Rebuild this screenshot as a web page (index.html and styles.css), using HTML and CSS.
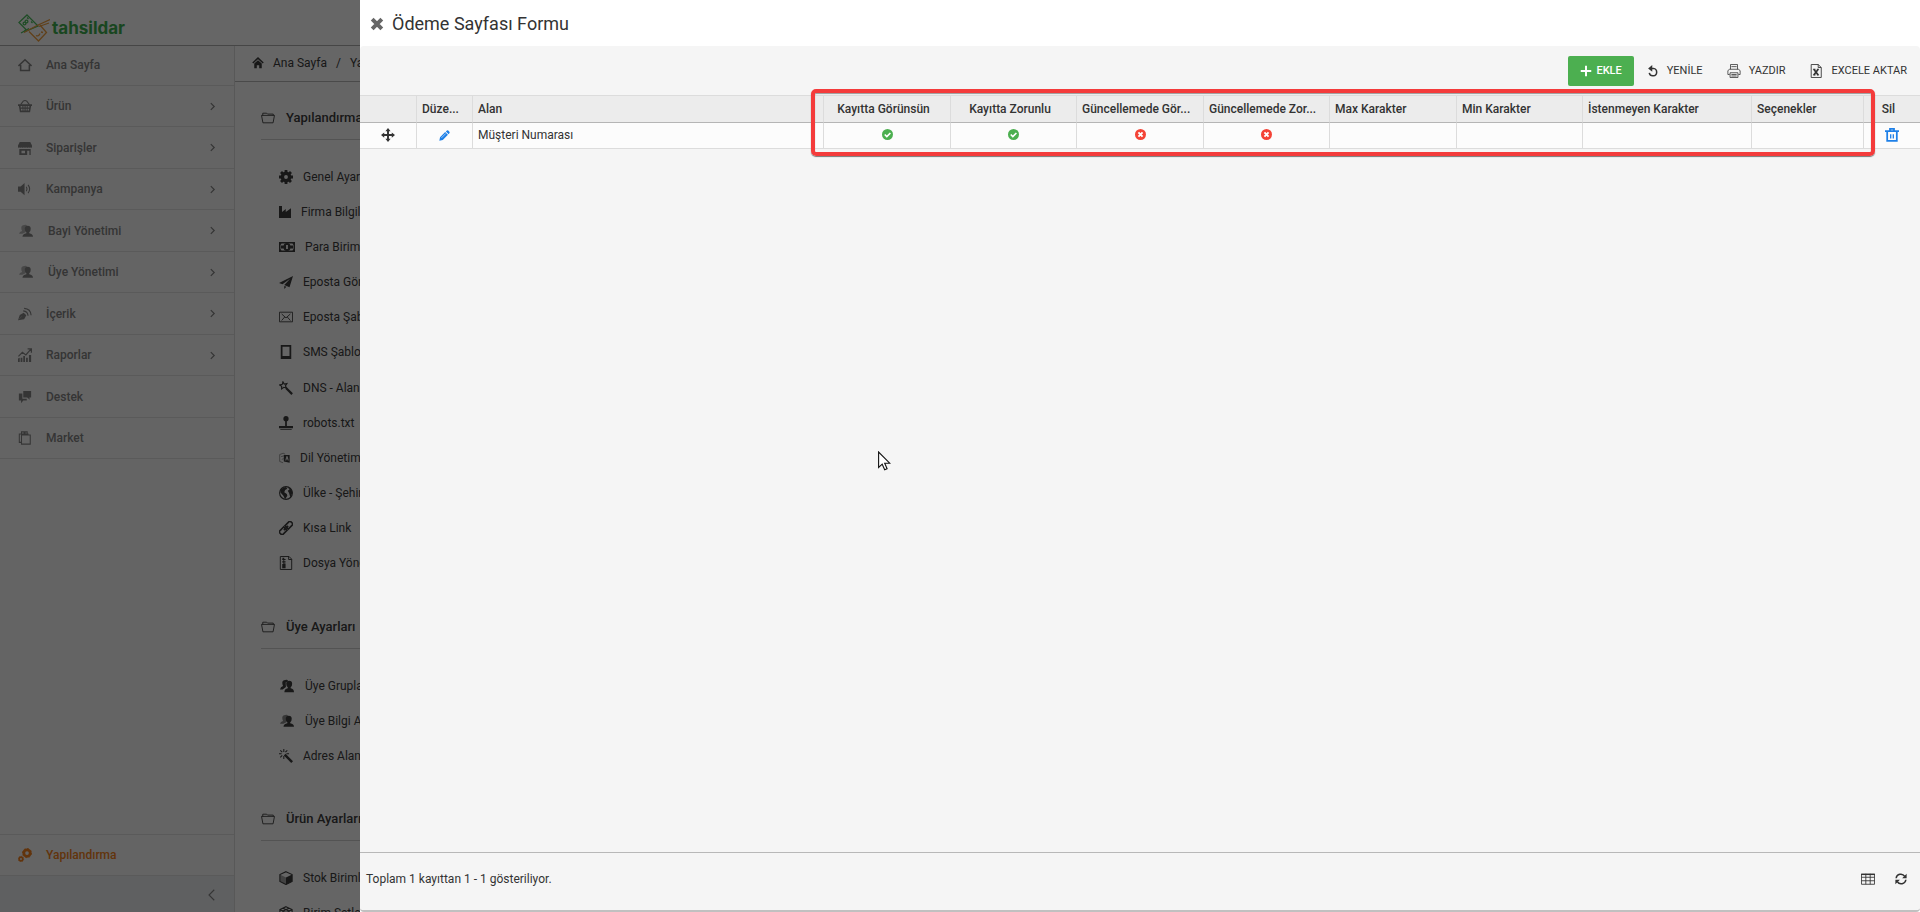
FILE: index.html
```html
<!DOCTYPE html>
<html lang="tr">
<head>
<meta charset="utf-8">
<title>Ödeme Sayfası Formu</title>
<link rel="stylesheet" href="styles.css">
</head>
<body>
<svg class="sprite" aria-hidden="true">
  <symbol id="i-home" viewBox="0 0 16 16"><path d="M.5 9 8 2l7.500 7M3 8v6.200h10V8" fill="none" stroke="currentColor" stroke-width="1.800"/></symbol>
  <symbol id="i-homefill" viewBox="0 0 16 16"><path d="M1 8 8 1.500 15 8" fill="none" stroke="currentColor" stroke-width="2"/><path d="M3 8.600 8 4.200l5 4.400V15H9.600v-4H6.400v4H3z" fill="currentColor"/></symbol>
  <symbol id="i-basket" viewBox="0 0 16 16"><path d="M3 6.500 6 2.500Q8 .8 10 2.500l3 4" fill="none" stroke="currentColor" stroke-width="1.200"/><path d="M0 6h16v2h-1l-1.200 7H2.200L1 8H0zM3 8v1.800h2V8zm3.200 0v1.800h1.300V8zm2.500 0v1.800H10V8zM11 8v1.800h2V8zM3.400 11v2h1.800v-2zm2.800 0v2h1.300v-2zm2.500 0v2H10v-2zm2.300 0v2h1.600v-2z" fill="currentColor" fill-rule="evenodd"/></symbol>
  <symbol id="i-shop" viewBox="0 0 16 16"><path d="M2 1h12l2 4v2q-1 1.500-2.200 0-1 1.500-2 0-1 1.500-1.900 0-.9 1.500-1.900 0-1 1.500-1.900 0-1 1.500-2 0-1 1.500-2 0Q1 8.500 0 7V5zM1.500 9h13v7h-13zM4 11v3h4v-3zm6.500 0v5H13v-5z" fill="currentColor" fill-rule="evenodd"/></symbol>
  <symbol id="i-sound" viewBox="0 0 16 16"><path d="M0 5h3l4.500-4v14L3 11H0z" fill="currentColor"/><path d="M9.500 5.500q1.600 2.500 0 5M11.500 3.300q3.600 4.700 0 9.400" fill="none" stroke="currentColor" stroke-width="1.200"/></symbol>
  <symbol id="i-users" viewBox="0 0 16 16"><g fill="currentColor"><path opacity=".6" d="M6 1q3-.8 3.200 1.500L7 4l.8 5L4 11H0q.500-2 3.500-3Q2.500 6 2.600 4 2.800 1 6 1z"/><path d="M10 2q3.400 0 3.400 3.500 0 3-1.700 4v1.200q4.300.8 4.300 3.800H4q0-3 4.400-3.800V9.500Q6.600 8.500 6.600 5.500 6.600 2 10 2z"/></g></symbol>
  <symbol id="i-usersdark" viewBox="0 0 16 16"><g fill="currentColor"><path d="M6 1q3-.8 3.200 1.500L6.500 4l.3 5L3 12H0q.500-3 3.500-4Q2.500 6 2.600 4 2.800 1 6 1z"/><path d="M10.500 2q3.400 0 3.400 3.500 0 3-1.700 4v1.200Q16 11.500 16 15H5q0-3.500 3.900-4.300V9.500Q7.100 8.500 7.100 5.500 7.100 2 10.500 2z"/></g></symbol>
  <symbol id="i-blog" viewBox="0 0 16 16"><path d="M0 15l2-6 4.500-2.500 3 3L7 14z" fill="currentColor"/><path d="M0 15l4.500-4.500" stroke="#aaa"/><path d="M6 4.500q5 .5 5.500 5.500M7 1.500q7.500.5 8 8" fill="none" stroke="currentColor" stroke-width="1.300"/></symbol>
  <symbol id="i-chart" viewBox="0 0 16 16"><path d="M0 16v-4l2-1v5zm3 0v-5h2v5zm3 0V9h2v7zm3.200 0v-5h2v5zm3.300 0V8h2.500v8z" fill="currentColor"/><path d="M.5 9.500 5 5l4 3 5.500-6.500M11 1h4.300v4.500" fill="none" stroke="currentColor" stroke-width="1.400"/></symbol>
  <symbol id="i-chat" viewBox="0 0 16 16"><path d="M6 1h9v7.500h-2l.5 2.500-3-2.500H6zM1 4h4v6h5v2H6l-2.500 3V12H1z" fill="currentColor"/></symbol>
  <symbol id="i-bag" viewBox="0 0 16 16"><path d="M4 4.500h10V15H4zM4 13H1.500V3.500H12M4 3V1h3v2.500M8 3V1h2.500v3" fill="none" stroke="currentColor" stroke-width="1.200"/></symbol>
  <symbol id="i-gears" viewBox="0 0 16 16"><g fill="none" stroke="currentColor"><circle cx="10.300" cy="5.800" r="3.700" stroke-width="3.200"/><circle cx="10.300" cy="5.800" r="5.200" stroke-width="1" stroke-dasharray="2 2"/><circle cx="3.400" cy="12.600" r="2.100" stroke-width="2"/><circle cx="3.400" cy="12.600" r="3.100" stroke-width=".7" stroke-dasharray="1.200 1.200"/></g></symbol>
  <symbol id="i-right" viewBox="0 0 16 16"><path d="M5 2l6 6-6 6" fill="none" stroke="currentColor" stroke-width="2.200"/></symbol>
  <symbol id="i-left" viewBox="0 0 16 16"><path d="M11 1 4 8l7 7" fill="none" stroke="currentColor" stroke-width="1.500"/></symbol>
  <symbol id="i-folder" viewBox="0 0 16 16"><path d="M2 5V2.500h4.500l1 1H14V5M.6 5h14.800l-1.600 8.500H2.200z" fill="none" stroke="currentColor"/></symbol>
  <symbol id="i-gear" viewBox="0 0 16 16"><circle cx="8" cy="8" r="4.200" fill="none" stroke="currentColor" stroke-width="4"/><path d="M8 0v3M8 13v3M0 8h3M13 8h3M2.300 2.300l2 2M11.700 11.700l2 2M2.300 13.700l2-2M11.700 4.300l2-2" stroke="currentColor" stroke-width="3.200"/></symbol>
  <symbol id="i-factory" viewBox="0 0 16 16"><path d="M0 0h4v8l5-4v4l7-5v13H0z" fill="currentColor"/></symbol>
  <symbol id="i-cash" viewBox="0 0 16 10"><path d="M0 0h16v10H0zM2.500 1.500 1.500 3v4l1 1.500h11l1-1.500V3l-1-1.500z" fill="currentColor" fill-rule="evenodd"/><path d="M8 1a3.600 4 0 0 1 0 8 3.600 4 0 0 1 0-8zm-.9 2v4h1.800V3zM2 3.500h2.500v3H2zm9.500 0H14v3h-2.500z" fill="currentColor" fill-rule="evenodd"/></symbol>
  <symbol id="i-plane" viewBox="0 0 16 16"><path d="M16 1 0 9l4 1.500L13 4l-7 7.500 6 2.500zM6 12.500V16l2.500-2.500z" fill="currentColor"/></symbol>
  <symbol id="i-mail" viewBox="0 0 16 16"><path d="M.5 2.500h15v11H.5zM3 4.500l5 4.500 5-4.500M3 12l3.500-4M13 12 9.500 8" fill="none" stroke="currentColor"/></symbol>
  <symbol id="i-tablet" viewBox="0 0 16 16"><path d="M2 0h12v16H2zM4 2v10.500h8V2z" fill="currentColor" fill-rule="evenodd"/></symbol>
  <symbol id="i-starwand" viewBox="0 0 16 16"><path d="M4.500 1 6 3.500 9 3 7.300 5.500 8.500 8l-3-.8L3 9V6L.8 4.500l3-.8z" fill="none" stroke="currentColor" stroke-width="1.300"/><path d="M8 8l7 7" stroke="currentColor" stroke-width="2.500"/></symbol>
  <symbol id="i-wand" viewBox="0 0 16 16"><path d="M6.500 6.500 15 15" stroke="currentColor" stroke-width="2.800"/><path d="M5.500 0v3.500M5.500 8v3.500M0 5.500h3M8.500 5.500h3M1.500 1.500l2.200 2.200M9.500 1.500 7.300 3.700M1.500 9.500l2.200-2.200" stroke="currentColor" stroke-width="1.200"/></symbol>
  <symbol id="i-joy" viewBox="0 0 16 16"><circle cx="8" cy="3" r="3" fill="currentColor"/><path d="M7 5h2v6.500h7V14H0v-2.500h7zM1.500 15h13v1h-13z" fill="currentColor"/></symbol>
  <symbol id="i-lang" viewBox="0 0 16 16"><path d="M1 3l5-2 3 1.500M1 3v10l5 2M3 6l4-1M4 10l3-1" fill="none" stroke="currentColor" opacity=".7"/><path d="M7 3.500h8.500V15L7 13zm3.700 2-1.500 6h1.300l.4-1.700h1.500l.4 2h1.300l-1.600-6.300zm.9 1.500.4 1.700h-.9z" fill="currentColor" fill-rule="evenodd"/></symbol>
  <symbol id="i-globe" viewBox="0 0 16 16"><circle cx="8" cy="8" r="7.300" fill="none" stroke="currentColor" stroke-width="1.300"/><path d="M2 4q3-3 6-3L9.500 3 7 4.500 6 7l3 2 .5 2L7 15 5 11 1.500 7zM10 1.500q5 2 5.500 6L13 13l-1.500-5L10 5.500 12 4z" fill="currentColor"/></symbol>
  <symbol id="i-link" viewBox="0 0 16 16"><g fill="none" stroke="currentColor" stroke-width="1.900" transform="rotate(-45 8 8)"><rect x="-1" y="5.300" width="8" height="5.400"/><rect x="9" y="5.300" width="8" height="5.400"/><path d="M4.500 8h7"/></g></symbol>
  <symbol id="i-zip" viewBox="0 0 16 16"><path d="M1.500.6h10l3 3v11.800h-13zM11 .6V4h3.500" fill="none" stroke="currentColor" stroke-width="1.100"/><path d="M4 2h2v1.300h1.500v1.400H6V6h1.500v1.400H6v1.300h1.500V14H3.700V9H5V7.400H3.700V6H5V4.700H3.700V3.300H4z" fill="currentColor"/></symbol>
  <symbol id="i-cube" viewBox="0 0 16 16"><path d="M8 .8 15 4v8l-7 3.500L1 12V4z" fill="none" stroke="currentColor" stroke-width="1.200"/><path d="M8 7.500 15 4v8l-7 3.500z" fill="currentColor"/><path d="M1 4l7 3.500V15L1 12z" fill="currentColor" opacity=".45"/></symbol>
  <symbol id="i-cubes" viewBox="0 0 16 16"><path d="M8 .8 15 4v8l-7 3.500L1 12V4zM1 4l7 3.500L15 4M8 7.500v8M4.500 2.500l7 3.200v8M11.500 2.500l-7 3.200v8M1 8l7 3.500L15 8" fill="none" stroke="currentColor" stroke-width="1.200"/></symbol>
  <symbol id="i-close" viewBox="0 0 16 16"><path d="M2.500 2.500l11 11M13.500 2.500l-11 11" stroke="currentColor" stroke-width="4.500"/></symbol>
  <symbol id="i-plus" viewBox="0 0 16 16"><path d="M8 1v14M1 8h14" stroke="currentColor" stroke-width="2.600"/></symbol>
  <symbol id="i-undo" viewBox="0 0 16 16"><path d="M5 4.500h3.500a5 5 0 1 1-5.500 6" fill="none" stroke="currentColor" stroke-width="2"/><path d="M7 0v9L1.500 4.500z" fill="currentColor"/></symbol>
  <symbol id="i-print" viewBox="0 0 16 16"><path d="M4 6V.6h8V6M1 12V7.500L3 6h10l2 1.500V12h-2M1 12h2M3.500 10h9v5.400h-9zM5 12h6M5 13.700h6M5 3h6" fill="none" stroke="currentColor" stroke-width=".9"/></symbol>
  <symbol id="i-excel" viewBox="0 0 16 16"><path d="M2.500.6h8l3.500 3.400v11.400H2.500zM10.500.6V4H14" fill="none" stroke="currentColor"/><path d="M5.500 6l5 6.500M10.500 6l-5 6.500" stroke="currentColor" stroke-width="2"/><path d="M4.500 6h3M9 6h2.500M4.500 12.500h3M9 12.500h2.500" stroke="currentColor"/></symbol>
  <symbol id="i-move" viewBox="0 0 16 16"><path d="M8 2v12M2 8h12" stroke="currentColor" stroke-width="2.200"/><path d="M8 0l3 3.700H5zM8 16l3-3.700H5zM0 8l3.700-3v6zM16 8l-3.700-3v6z" fill="currentColor"/></symbol>
  <symbol id="i-pencil" viewBox="0 0 16 16"><path d="M.5 15.500l1-5L9 3l4 4-7.500 7.500zM10 2l1.500-1.300q1-.7 2 .2l1.600 1.600q.9 1 .2 2L14 6z" fill="currentColor"/><path d="M3.500 11.500 10 5" stroke="#fff" stroke-width=".8"/></symbol>
  <symbol id="i-ok" viewBox="0 0 16 16"><circle cx="8" cy="8" r="8" fill="currentColor"/><path d="M4 8l3 3 5.200-5.200" fill="none" stroke="#fff" stroke-width="2.400"/></symbol>
  <symbol id="i-no" viewBox="0 0 16 16"><circle cx="8" cy="8" r="8" fill="currentColor"/><path d="M5 5l6 6M11 5l-6 6" stroke="#fff" stroke-width="2.800"/></symbol>
  <symbol id="i-trash" viewBox="0 0 16 16"><path d="M0 3.700h16M5.700 3V1h4.600v2M2.500 3.500v11.300h11V3.500" fill="none" stroke="currentColor" stroke-width="2"/><path d="M6.500 7v5M9.500 7v5" stroke="currentColor" stroke-width="1.500"/></symbol>
  <symbol id="i-grid" viewBox="0 0 16 16"><path d="M.5 2.500h15v11.500H.5zM.5 6h15M.5 10h15M5.500 2v12M10.500 2v12" fill="none" stroke="currentColor"/><path d="M0 2h16v1.500H0z" fill="currentColor"/></symbol>
  <symbol id="i-sync" viewBox="0 0 16 16"><path d="M1.500 7A6.300 6.300 0 0 1 13 4.500M14.500 9A6.300 6.300 0 0 1 3 11.500" fill="none" stroke="currentColor" stroke-width="2"/><path d="M15.500 1v6H9.500zM.5 15V9h6z" fill="currentColor"/></symbol>
</svg>

<div class="app">
  <header class="topbar">
    <a class="logo" href="#">
      <svg class="logo-mark" viewBox="0 0 32 28" aria-hidden="true">
        <g fill="none" stroke-width="1.300">
          <path d="M9 1 20 12l-8 3.500-6 2.500 2-2.500L1 8.500z" stroke="#4fbf60"/>
          <circle cx="6.500" cy="9.500" r="1.400" stroke="#4fbf60"/>
          <circle cx="8.500" cy="7.500" r="1.400" stroke="#4fbf60"/>
          <path d="M9 3.500l1.500 1.500M13 7.500l1.500 1.500M3 19l8-4.500" stroke="#4fbf60"/>
          <path d="M11 17.500 20.500 27l8-8.500L22 11" stroke="#f0a040"/>
          <path d="M32 5.500 19 11.500 6 18.500M31 9l-10 3.500" stroke="#f0a040"/>
          <path d="M18 21.500q2.500 1.500 4-2M23 18l2 .5" stroke="#f0a040"/>
        </g>
      </svg>
      <span class="logo-text">tahsildar</span>
    </a>
  </header>
  <div class="workspace">
    <aside class="sidebar">
      <nav class="menu">
        <a class="menu-item" href="#"><svg class="ic"><use href="#i-home"/></svg><span>Ana Sayfa</span></a>
        <a class="menu-item" href="#"><svg class="ic"><use href="#i-basket"/></svg><span>Ürün</span><svg class="ic arrow"><use href="#i-right"/></svg></a>
        <a class="menu-item" href="#"><svg class="ic"><use href="#i-shop"/></svg><span>Siparişler</span><svg class="ic arrow"><use href="#i-right"/></svg></a>
        <a class="menu-item" href="#"><svg class="ic"><use href="#i-sound"/></svg><span>Kampanya</span><svg class="ic arrow"><use href="#i-right"/></svg></a>
        <a class="menu-item" href="#"><svg class="ic wide"><use href="#i-users"/></svg><span>Bayi Yönetimi</span><svg class="ic arrow"><use href="#i-right"/></svg></a>
        <a class="menu-item" href="#"><svg class="ic wide"><use href="#i-users"/></svg><span>Üye Yönetimi</span><svg class="ic arrow"><use href="#i-right"/></svg></a>
        <a class="menu-item" href="#"><svg class="ic"><use href="#i-blog"/></svg><span>İçerik</span><svg class="ic arrow"><use href="#i-right"/></svg></a>
        <a class="menu-item" href="#"><svg class="ic"><use href="#i-chart"/></svg><span>Raporlar</span><svg class="ic arrow"><use href="#i-right"/></svg></a>
        <a class="menu-item" href="#"><svg class="ic"><use href="#i-chat"/></svg><span>Destek</span></a>
        <a class="menu-item" href="#"><svg class="ic"><use href="#i-bag"/></svg><span>Market</span></a>
      </nav>
      <a class="menu-item menu-config" href="#"><svg class="ic"><use href="#i-gears"/></svg><span>Yapılandırma</span></a>
      <button class="collapse" type="button" aria-label="Menüyü daralt"><svg class="ic narrow"><use href="#i-left"/></svg></button>
    </aside>
    <main class="content">
      <nav class="crumbs" aria-label="Konum">
        <svg class="ic narrow"><use href="#i-homefill"/></svg><a href="#">Ana Sayfa</a><span>/</span><a href="#">Yapılandırma</a>
      </nav>
      <section class="group">
        <h2 class="group-title"><svg class="ic"><use href="#i-folder"/></svg>Yapılandırma Ayarları</h2>
        <ul class="links">
          <li><a href="#"><svg class="ic"><use href="#i-gear"/></svg>Genel Ayarlar</a></li>
          <li><a href="#"><svg class="ic narrow"><use href="#i-factory"/></svg>Firma Bilgileri</a></li>
          <li><a href="#"><svg class="ic wide"><use href="#i-cash"/></svg>Para Birimleri</a></li>
          <li><a href="#"><svg class="ic"><use href="#i-plane"/></svg>Eposta Gönderimi</a></li>
          <li><a href="#"><svg class="ic"><use href="#i-mail"/></svg>Eposta Şablonları</a></li>
          <li><a href="#"><svg class="ic"><use href="#i-tablet"/></svg>SMS Şablonları</a></li>
          <li><a href="#"><svg class="ic"><use href="#i-starwand"/></svg>DNS - Alan Adı</a></li>
          <li><a href="#"><svg class="ic"><use href="#i-joy"/></svg>robots.txt</a></li>
          <li><a href="#"><svg class="ic slim"><use href="#i-lang"/></svg>Dil Yönetimi</a></li>
          <li><a href="#"><svg class="ic"><use href="#i-globe"/></svg>Ülke - Şehir</a></li>
          <li><a href="#"><svg class="ic"><use href="#i-link"/></svg>Kısa Link</a></li>
          <li><a href="#"><svg class="ic"><use href="#i-zip"/></svg>Dosya Yönetimi</a></li>
        </ul>
      </section>
      <section class="group">
        <h2 class="group-title"><svg class="ic"><use href="#i-folder"/></svg>Üye Ayarları</h2>
        <ul class="links">
          <li><a href="#"><svg class="ic wide"><use href="#i-usersdark"/></svg>Üye Grupları</a></li>
          <li><a href="#"><svg class="ic wide"><use href="#i-users"/></svg>Üye Bilgi Alanları</a></li>
          <li><a href="#"><svg class="ic"><use href="#i-wand"/></svg>Adres Alanları</a></li>
        </ul>
      </section>
      <section class="group">
        <h2 class="group-title"><svg class="ic"><use href="#i-folder"/></svg>Ürün Ayarları</h2>
        <ul class="links">
          <li><a href="#"><svg class="ic"><use href="#i-cube"/></svg>Stok Birimleri</a></li>
          <li><a href="#"><svg class="ic"><use href="#i-cubes"/></svg>Birim Setleri</a></li>
        </ul>
      </section>
    </main>
  </div>
</div>

<div class="overlay">
  <section class="drawer" role="dialog" aria-labelledby="drawer-title">
    <header class="drawer-head">
      <button class="close" type="button" aria-label="Kapat"><svg class="ic"><use href="#i-close"/></svg></button>
      <h1 id="drawer-title">Ödeme Sayfası Formu</h1>
    </header>
    <div class="panel">
      <div class="toolbar">
        <button class="btn btn-add" type="button"><svg class="ic"><use href="#i-plus"/></svg>EKLE</button>
        <button class="btn" type="button"><svg class="ic narrow"><use href="#i-undo"/></svg>YENİLE</button>
        <button class="btn" type="button"><svg class="ic"><use href="#i-print"/></svg>YAZDIR</button>
        <button class="btn" type="button"><svg class="ic"><use href="#i-excel"/></svg>EXCELE AKTAR</button>
      </div>
      <div class="table-wrap">
        <table class="grid">
          <colgroup>
            <col class="c-drag"><col class="c-tool"><col>
            <col class="c-flag"><col class="c-text"><col class="c-flag"><col class="c-text"><col class="c-flag"><col class="c-text">
            <col class="c-long"><col class="c-opt"><col class="c-tool">
          </colgroup>
          <thead>
            <tr>
              <th></th><th>Düze...</th><th>Alan</th>
              <th class="mid">Kayıtta Görünsün</th><th class="mid">Kayıtta Zorunlu</th>
              <th>Güncellemede Gör...</th><th>Güncellemede Zor...</th>
              <th>Max Karakter</th><th>Min Karakter</th><th>İstenmeyen Karakter</th><th>Seçenekler</th><th class="mid">Sil</th>
            </tr>
          </thead>
          <tbody>
            <tr>
              <td class="mid"><svg class="ic"><use href="#i-move"/></svg></td>
              <td class="mid"><button class="cell-btn" type="button" aria-label="Düzenle"><svg class="ic small"><use href="#i-pencil"/></svg></button></td>
              <td>Müşteri Numarası</td>
              <td class="mid"><svg class="ic small yes"><use href="#i-ok"/></svg></td>
              <td class="mid"><svg class="ic small yes"><use href="#i-ok"/></svg></td>
              <td class="mid"><svg class="ic small no"><use href="#i-no"/></svg></td>
              <td class="mid"><svg class="ic small no"><use href="#i-no"/></svg></td>
              <td></td><td></td><td></td><td></td>
              <td class="mid"><button class="cell-btn" type="button" aria-label="Sil"><svg class="ic"><use href="#i-trash"/></svg></button></td>
            </tr>
          </tbody>
        </table>
        <div class="highlight"></div>
      </div>
      <footer class="pager">
        <span>Toplam 1 kayıttan 1 - 1 gösteriliyor.</span>
        <div class="pager-tools">
          <button class="cell-btn" type="button" aria-label="Sütunlar"><svg class="ic"><use href="#i-grid"/></svg></button>
          <button class="cell-btn" type="button" aria-label="Yenile"><svg class="ic narrow"><use href="#i-sync"/></svg></button>
        </div>
      </footer>
    </div>
  </section>
</div>
<svg class="pointer" viewBox="0 0 13 20" aria-hidden="true"><path d="M.6 1v15.500l3.600-3.300 2.500 5.600 2.400-1-2.400-5.600h5z" fill="#fff" stroke="#111" stroke-width="1.100"/></svg>
</body>
</html>
```
FILE: styles.css
```css
* { box-sizing: border-box; }
body {
  margin: 0;
  font: 12px/16px Roboto, "Liberation Sans", sans-serif;
  color: #333;
  overflow: hidden;
}
a { color: inherit; text-decoration: none; }
button { font: inherit; color: inherit; border: 0; background: none; padding: 0; }
h1, h2, ul { margin: 0; padding: 0; font-weight: 400; }
.sprite { position: absolute; width: 0; height: 0; }
.ic { width: 14px; height: 14px; flex: none; display: block; }
.ic.wide { width: 16px; }
.ic.narrow { width: 12px; height: 12px; }
.ic.slim { width: 11px; height: 12px; }
.ic.small { width: 11px; height: 11px; }

/* page behind the drawer */
.app { height: 100vh; display: flex; flex-direction: column; background: #fdfdfd; overflow: hidden; }
.topbar {
  height: 46px;
  flex: none;
  display: flex;
  padding: 14px 18px 0;
  background: #fff;
  border-bottom: 1px solid #b0b0b0;
}
.logo { display: flex; gap: 2px; height: 28px; }
.logo-mark { width: 32px; height: 28px; }
.logo-text { font: 700 17px/28px Inter, sans-serif; color: #3fae50; }
.workspace { flex: 1; min-height: 0; display: flex; }
.sidebar {
  width: 235px;
  flex: none;
  display: flex;
  flex-direction: column;
  background: #fafafa;
  border-right: 1px solid #dcdcdc;
}
.menu { flex: 1; }
.menu-item {
  display: flex;
  align-items: center;
  gap: 14px;
  height: 41px;
  padding: 0 17px 0 18px;
  font-weight: 500;
  color: #858585;
  border-bottom: 1px solid #e2e2e2;
}
.menu-item:nth-child(odd) { height: 42px; }
.menu-item:first-child { height: 40px; padding-bottom: 2px; }
.menu-item .arrow { width: 9px; height: 9px; margin-left: auto; }
.menu-config, .menu-config:nth-child(n) { height: 42px; border-top: 1px solid #e2e2e2; color: #f58220; }
.collapse {
  height: 36px;
  display: flex;
  align-items: center;
  justify-content: flex-end;
  padding: 2px 16px 0;
  color: #858585;
  background: #eef0f3;
}
.content { flex: 1; min-width: 0; color: #3c3c3c; }
.crumbs {
  display: flex;
  align-items: center;
  gap: 9px;
  height: 36px;
  padding: 0 17px 2px;
  background: #fff;
  border-bottom: 1px solid #b8b8b8;
}
.group { padding: 17px 26px 0; }
.group + .group { padding-top: 27px; }
.group-title {
  display: flex;
  align-items: center;
  gap: 11px;
  height: 41px;
  padding-bottom: 2px;
  font-size: 13px;
  font-weight: 500;
  border-bottom: 1px solid #d0d0d0;
}
.links { list-style: none; padding: 19px 18px 0; }
.links a { display: flex; align-items: center; gap: 10px; height: 35px; }
.links li:nth-child(6n) a { height: 36px; }

/* drawer */
.overlay {
  position: fixed;
  inset: 0;
  display: flex;
  padding-left: 360px;
  background: rgba(0, 0, 0, .6);
}
.drawer { flex: 1; min-width: 0; display: flex; flex-direction: column; background: #fff; }
.drawer-head { display: flex; align-items: center; gap: 8px; height: 46px; padding: 1px 10px 0; }
.drawer-head h1 { font-size: 18px; line-height: 24px; }
.close { color: #666; }
.panel {
  flex: 1;
  display: flex;
  flex-direction: column;
  background: #f5f5f5;
  border-radius: 4px;
  border-bottom: 2px solid #c0c0c0;
}
.toolbar { display: flex; justify-content: flex-end; gap: 2px; padding: 10px 2px 9px; }
.btn {
  display: flex;
  align-items: center;
  gap: 8px;
  height: 30px;
  padding: 0 11px;
  font-size: 11px;
  border-radius: 2px;
}
.btn-add { gap: 4px; padding: 0 12px; background: #4caf50; color: #fff; font-weight: 500; }
.btn-add .ic { width: 12px; height: 12px; }
.table-wrap { position: relative; flex: 1; }
.grid { width: 100%; table-layout: fixed; border-collapse: separate; border-spacing: 0; }
.c-drag { width: 57px; }
.c-tool { width: 56px; }
.c-flag { width: 127px; }
.c-text { width: 126px; }
.c-long { width: 169px; }
.c-opt { width: 112px; }
.grid th, .grid td {
  padding: 0 5px;
  text-align: left;
  white-space: nowrap;
  overflow: hidden;
  border-right: 1px solid #dcdcdc;
  border-bottom: 1px solid #dcdcdc;
}
.grid th {
  height: 28px;
  font-weight: 500;
  background: #ececec;
  border-top: 1px solid #dcdcdc;
  border-bottom-color: #b5b5b5;
}
.grid td { height: 26px; padding-bottom: 2px; background: #fcfcfc; }
.grid th:last-child, .grid td:last-child { border-right: 0; }
.grid .mid { text-align: center; }
.grid th.mid { padding-right: 12px; }
.grid .mid .ic { margin: 0 auto; }
.cell-btn { display: inline-block; vertical-align: middle; color: #1e80e8; }
.yes { color: #4caf50; }
.no { color: #f44336; }
.highlight {
  position: absolute;
  top: -6px;
  right: 45px;
  width: 1064px;
  height: 67px;
  border: 4px solid #f43b3b;
  border-radius: 5px;
  box-shadow: 0 1px 1px #777, inset 0 1px 1px #999;
}
.pager {
  display: flex;
  align-items: center;
  justify-content: space-between;
  height: 58px;
  padding: 0 13px 6px 6px;
  border-top: 1px solid #b8b8b8;
}
.pager-tools { display: flex; align-items: center; gap: 20px; }
.pager-tools .cell-btn { color: #333; }
.pointer { position: fixed; left: 878px; top: 451px; width: 13px; height: 20px; }
```
